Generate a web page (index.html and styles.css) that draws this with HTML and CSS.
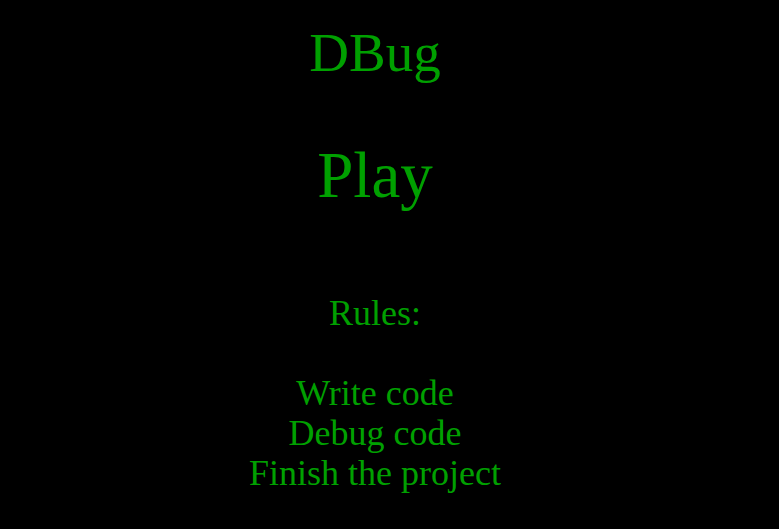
FILE: index.html
```html
<!DOCTYPE html>
<html lang="en">
<head>
<meta charset="utf-8">
<title>DBug</title>
<link rel="stylesheet" href="styles.css">
</head>
<body>
<main class="page">
  <h1 class="title">DBug</h1>
  <a class="play" href="#">Play</a>
  <div class="rules">
    <p class="rules-head">Rules:</p>
    <ul class="rules-list">
      <li>Write code</li>
      <li>Debug code</li>
      <li>Finish the project</li>
    </ul>
  </div>
</main>
</body>
</html>
```
FILE: styles.css
```css
html, body {
  margin: 0;
  padding: 0;
  background: #000;
}
body {
  font-family: "Liberation Serif", "Times New Roman", serif;
  color: rgb(0, 160, 0);
  min-height: 529px;
}
.page {
  width: 750px;
  display: flex;
  flex-direction: column;
  align-items: center;
  text-align: center;
  padding-top: 21px;
}
.title {
  margin: 0;
  font-size: 55px;
  font-weight: normal;
  line-height: 63px;
}
.play {
  margin-top: 53px;
  font-size: 65px;
  line-height: 76px;
  color: inherit;
  text-decoration: none;
}
.rules {
  margin-top: 80px;
  font-size: 36px;
  line-height: 40px;
}
.rules-head {
  margin: 0 0 40px;
}
.rules-list {
  list-style: none;
  margin: 0;
  padding: 0;
}
```
